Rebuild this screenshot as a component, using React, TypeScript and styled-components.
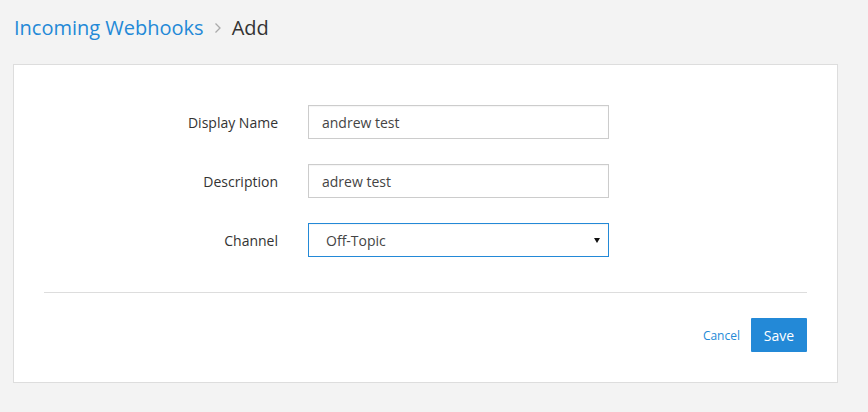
import React from "react";
import styled, { createGlobalStyle } from "styled-components";

const Global = createGlobalStyle`
  html, body { margin: 0; padding: 0; background: #f3f3f3; }
  body { font-family: "Open Sans", "Liberation Sans", sans-serif; color: #333; }
  * { box-sizing: border-box; }
`;

const Page = styled.div`
  width: 868px;
  height: 412px;
  padding: 0 30px 0 13px;
  background: #f3f3f3;
`;

const Header = styled.h1`
  margin: 0;
  height: 64px;
  display: flex;
  align-items: center;
  gap: 10px;
  padding: 0 0 8px 1px;
  font-size: 20px;
  font-weight: 400;
  line-height: 28px;
`;

const Crumb = styled.a`
  color: #2389d7;
  text-decoration: none;
`;

const Chevron = styled.span`
  display: flex;
  align-items: center;
`;

const Current = styled.span`
  color: #333;
`;

const Panel = styled.div`
  background: #fff;
  border: 1px solid #ddd;
  padding: 40px 30px 30px;
`;

const Form = styled.div`
  display: grid;
  grid-template-columns: 234px 301px;
  column-gap: 30px;
  row-gap: 25px;
  align-items: center;
`;

const Label = styled.label`
  text-align: right;
  font-size: 14px;
  color: #333;
`;

const Input = styled.div<{ $focus?: boolean }>`
  height: 34px;
  border: 1px solid ${(p) => (p.$focus ? "#2389d7" : "#ccc")};
  display: flex;
  align-items: center;
  justify-content: space-between;
  padding: 0 ${(p) => (p.$focus ? "8px 0 17px" : "13px")};
  font-size: 14px;
  color: #444;
  box-shadow: inset 0 1px 1px rgba(0,0,0,0.04);
`;

const Arrow = styled.svg`
  display: block;
`;

const Divider = styled.hr`
  border: 0;
  border-top: 1px solid #ddd;
  margin: 35px 0 25px;
`;

const Actions = styled.div`
  display: flex;
  justify-content: flex-end;
  align-items: center;
  gap: 11px;
`;

const Cancel = styled.a`
  font-size: 12px;
  color: #2389d7;
  text-decoration: none;
`;

const Save = styled.button`
  height: 34px;
  width: 56px;
  border: 0;
  border-radius: 1px;
  background: #2389d7;
  color: #fff;
  font-family: inherit;
  font-size: 14px;
`;

export default function App() {
  return (
    <>
      <Global />
      <Page>
        <Header>
          <Crumb>Incoming Webhooks</Crumb>
          <Chevron>
            <svg width="8" height="12" viewBox="0 0 8 12">
              <path d="M1.5 1.5 L6 6 L1.5 10.5" fill="none" stroke="#aaa" strokeWidth="1.3" />
            </svg>
          </Chevron>
          <Current>Add</Current>
        </Header>
        <Panel>
          <Form>
            <Label>Display Name</Label>
            <Input>andrew test</Input>
            <Label>Description</Label>
            <Input>adrew test</Input>
            <Label>Channel</Label>
            <Input $focus>
              <span>Off-Topic</span>
              <Arrow width="6" height="5" viewBox="0 0 6 5">
                <polygon points="0,0 6,0 3,5" fill="#111" />
              </Arrow>
            </Input>
          </Form>
          <Divider />
          <Actions>
            <Cancel>Cancel</Cancel>
            <Save>Save</Save>
          </Actions>
        </Panel>
      </Page>
    </>
  );
}
